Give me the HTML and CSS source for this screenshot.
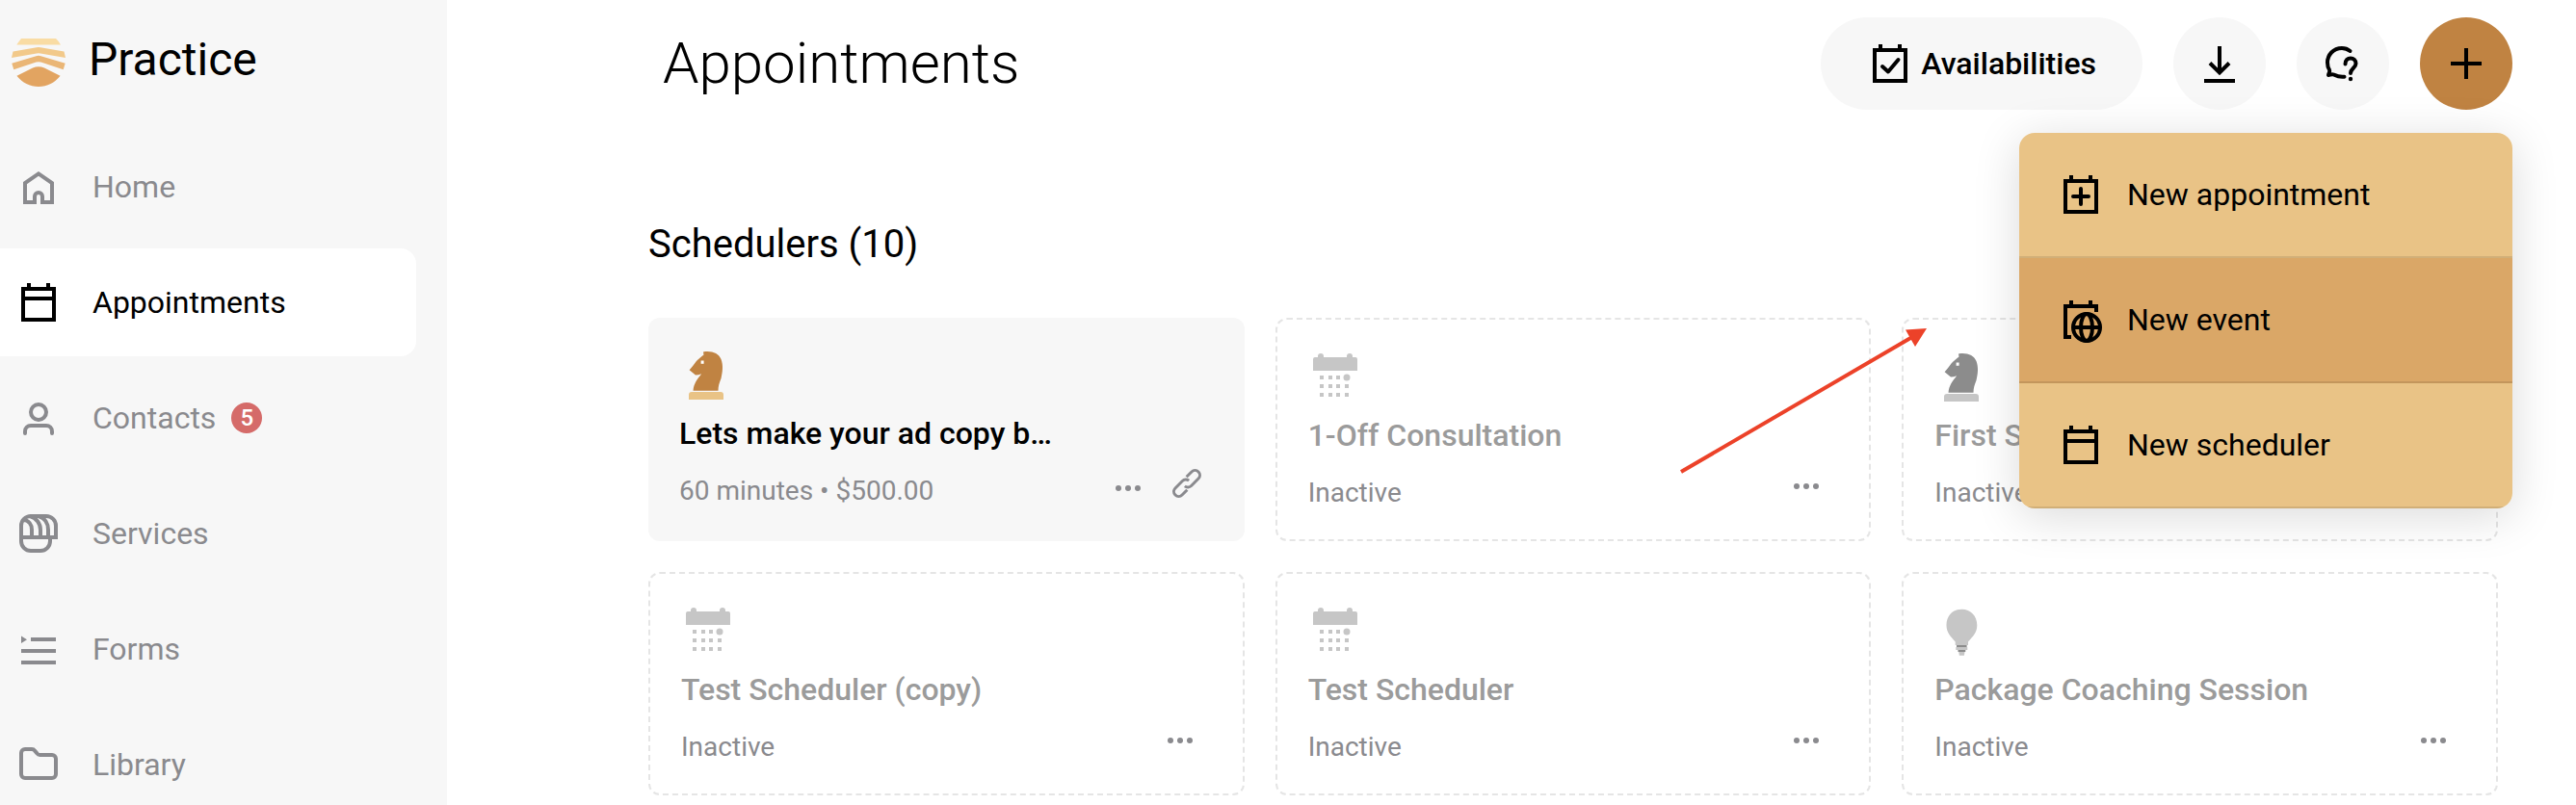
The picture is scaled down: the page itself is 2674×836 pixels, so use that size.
FILE: index.html
```html
<!DOCTYPE html>
<html lang="en">
<head>
  <meta charset="UTF-8">
  <meta name="viewport" content="width=device-width, initial-scale=1.0">
  <title>Practice - Appointments</title>
  <link rel="stylesheet" href="styles.css">
</head>
<body>
  <!-- shared icons -->
  <svg class="sprite" aria-hidden="true">
    <symbol id="calendar" viewBox="0 0 48 48">
      <path d="M8 10h32v32H8zM8 20h32M14 4v6M34 4v6"/>
    </symbol>
    <symbol id="dots" viewBox="0 0 32 32">
      <g fill="currentColor" stroke="none">
        <circle cx="5" cy="17" r="3"/>
        <circle cx="15" cy="17" r="3"/>
        <circle cx="25" cy="17" r="3"/>
      </g>
    </symbol>
    <symbol id="month" viewBox="0 0 56 56">
      <path fill="#c6c6c6" d="M5 9a2 2 0 0 1 2-2h3V6a3 3 0 0 1 6 0v1h24V6a3 3 0 0 1 6 0v1h3a2 2 0 0 1 2 2v12H5z"/>
      <path fill="#c6c6c6" d="M12 26h4v4h-4zM21 26h4v4h-4zM29 26h4v4h-4zM12 35h4v4h-4zM21 35h4v4h-4zM29 35h4v4h-4zM38 35h4v4h-4zM12 44h4v4h-4zM21 44h4v4h-4zM29 44h4v4h-4zM38 44h4v4h-4z"/>
      <circle fill="#c6c6c6" cx="40" cy="28" r="3.5"/>
    </symbol>
    <symbol id="knight" viewBox="0 0 56 56">
      <path fill="var(--piece)" d="M25 3.400C34 2 41 5 43.500 11c2.500 7 1.500 13 0 20-2 5-3 8-3 12.700h-26c.7-7 3.800-11.500 8.700-17.400-2 .8-4 1.200-6.200 1.200l-6.400-5.200C13 19.500 15 17 17.500 13.500 20 10.500 23 8.500 25.500 6.500z"/>
      <path fill="#fff" d="M22.600 12.500h3v3.300h-3z"/>
      <path fill="var(--base)" d="M10 53v-5a3 3 0 0 1 3-3h30a3 3 0 0 1 3 3v5z"/>
    </symbol>
    <symbol id="bulb" viewBox="0 0 56 56">
      <path fill="#c6c6c6" d="M28.300 4.700c9.500 0 16 7 16 16.500 0 8-4.500 11.500-9.300 17.300V42H21.700v-3.500c-4.700-5.800-9.200-9.300-9.200-17.300 0-9.500 6.500-16.500 15.800-16.500z"/>
      <path fill="#8c8c8c" d="M23 42h10.600v2H23zM24.500 47h7.800v2h-7.800z"/>
      <path fill="#c6c6c6" d="M22.300 44h12v3h-12zM25.300 49h6.200l-.6 3.700h-5z"/>
    </symbol>
  </svg>

  <div class="app">
    <aside class="sidebar">
      <div class="brand">
        <svg class="logo" viewBox="0 0 56 50">
          <path fill="#f9dca4" d="M5.300 6.500C7 4 8.500 2 10 0h36c2 2 3.500 4 5 6.500z"/>
          <path fill="#f2c98a" d="M1.500 13.500L26 9.300q2-.4 4 0l24.500 4.200L56 20l-26-4.500q-2-.4-4 0L0 20z"/>
          <path fill="#eab676" d="M.3 25.800L25.500 18.200q2.500-.7 5 0l25.200 7.600-2 6.400-23.200-7.600q-2.500-.8-5 0L2.300 32.200z"/>
          <path fill="#e2a461" d="M5.500 38.800L22 30.500q6-2.400 12 0l16.500 8.300C45 46 37 50 28 50S11 46 5.500 38.800z"/>
        </svg>
        <span class="brand-name">Practice</span>
      </div>
      <nav>
        <ul class="nav-list">
          <li>
            <a class="nav-link" href="#home">
              <svg class="icon" viewBox="0 0 48 48"><path d="M10 40h10v-6a4 4 0 0 1 8 0v6h10V20L24 10.400 10 20z"/></svg>
              Home
            </a>
          </li>
          <li>
            <a class="nav-link active" href="#appointments">
              <svg class="icon"><use href="#calendar"/></svg>
              Appointments
            </a>
          </li>
          <li>
            <a class="nav-link" href="#contacts">
              <svg class="icon" viewBox="0 0 48 48"><circle cx="24" cy="18" r="8"/><path stroke-linecap="round" d="M10 40v-2a6 6 0 0 1 6-6h16a6 6 0 0 1 6 6v2"/></svg>
              Contacts
              <span class="badge">5</span>
            </a>
          </li>
          <li>
            <a class="nav-link" href="#services">
              <svg class="icon" viewBox="0 0 48 48"><path d="M6 28V16A10 10 0 0 1 16 6h16a10 10 0 0 1 10 10v12zM6 28v4a10 10 0 0 0 10 10h10a10 10 0 0 0 10-10v-4M8 10c6 0 9 5 9 10v8M15 6c7 2 11 8 11 14v8M24 6c7 2 10 8 10 14v8"/></svg>
              Services
            </a>
          </li>
          <li>
            <a class="nav-link" href="#forms">
              <svg class="icon" viewBox="0 0 48 48"><path d="M16 14h26M6 26h36M6 38h36"/><path fill="currentColor" stroke="none" d="M6 10.500l6 3.700-6 3.800z"/></svg>
              Forms
            </a>
          </li>
          <li>
            <a class="nav-link" href="#library">
              <svg class="icon" viewBox="0 0 48 48"><path d="M10 8h7q2 0 3 1.500l2.500 3q1 1.500 3 1.500H38a4 4 0 0 1 4 4v16a4 4 0 0 1-4 4H10a4 4 0 0 1-4-4V12a4 4 0 0 1 4-4z"/></svg>
              Library
            </a>
          </li>
        </ul>
      </nav>
    </aside>

    <main class="main">
      <header class="page-header">
        <h1>Appointments</h1>
        <div class="header-actions">
          <button class="pill" type="button">
            <svg class="icon" viewBox="0 0 48 48"><path d="M8 10h32v32H8zM14 4v6M34 4v6"/><path stroke-linecap="round" stroke-linejoin="round" d="M16 27l6 5.500L32.500 20"/></svg>
            Availabilities
          </button>
          <button class="round" type="button" aria-label="Download">
            <svg class="icon" viewBox="0 0 48 48"><path d="M24 6v28M14 23.500l10 10 10-10M8 42h32"/></svg>
          </button>
          <button class="round" type="button" aria-label="Help">
            <svg class="icon" viewBox="0 0 48 48"><path stroke-linecap="round" stroke-linejoin="round" d="M31.500 11C29 9 26 8 23 8 14 8 8 15 8 23c0 3 .7 5.500 2 7.500.8 1.500-.5 3.500-1 5.500 2-.3 3.500-1.300 5.500-.5 3.500 1.700 7 2.700 11 2.200M26.500 24.500c0-4 2.500-6 5.500-6s5.500 2.300 5.500 5.500c0 4.500-5.500 5-5.500 10"/><circle cx="32" cy="40" r="2.200" fill="currentColor" stroke="none"/></svg>
          </button>
          <div class="create">
            <button class="round fab" type="button" aria-label="Create" aria-expanded="true">
              <svg class="icon" viewBox="0 0 48 48"><path d="M24 8v32M8 24h32"/></svg>
            </button>
            <div class="create-menu">
              <button class="menu-item" type="button">
                <svg class="icon" viewBox="0 0 48 48"><path d="M8 10h32v32H8zM14 4v6M34 4v6"/><path stroke-linecap="round" d="M24 18v16M16 26h16"/></svg>
                New appointment
              </button>
              <button class="menu-item selected" type="button">
                <svg class="icon" viewBox="0 0 48 48"><path d="M14 42H8V10h32v6M14 4v6M34 4v6"/><circle cx="30" cy="32" r="14"/><ellipse cx="30" cy="32" rx="6" ry="14"/><path d="M16 32h28"/></svg>
                New event
              </button>
              <button class="menu-item" type="button">
                <svg class="icon"><use href="#calendar"/></svg>
                New scheduler
              </button>
            </div>
          </div>
        </div>
      </header>

      <section class="schedulers">
        <h2>Schedulers (10)</h2>
        <div class="cards">
          <article class="card">
            <svg class="card-icon knight"><use href="#knight"/></svg>
            <h3>Lets make your ad copy b…</h3>
            <div class="card-foot">
              <p>60 minutes • $500.00</p>
              <div class="card-actions">
                <button type="button" aria-label="More"><svg><use href="#dots"/></svg></button>
                <button class="link-btn" type="button" aria-label="Copy link">
                  <svg viewBox="-16 -16 32 32"><g transform="rotate(-45)"><path d="M-4.500 5H-12a5 5 0 0 1 0-10H-1.500a5 5 0 0 1 5 4.500M4.500-5H12a5 5 0 0 1 0 10H1.500a5 5 0 0 1-5-4.500"/></g></svg>
                </button>
              </div>
            </div>
          </article>

          <article class="card inactive">
            <svg class="card-icon"><use href="#month"/></svg>
            <h3>1-Off Consultation</h3>
            <div class="card-foot">
              <p>Inactive</p>
              <div class="card-actions">
                <button type="button" aria-label="More"><svg><use href="#dots"/></svg></button>
              </div>
            </div>
          </article>

          <article class="card inactive">
            <svg class="card-icon knight"><use href="#knight"/></svg>
            <h3>First Session</h3>
            <div class="card-foot">
              <p>Inactive</p>
              <div class="card-actions">
                <button type="button" aria-label="More"><svg><use href="#dots"/></svg></button>
              </div>
            </div>
            <svg class="pointer" viewBox="0 0 264 160">
              <path stroke="#ec4229" stroke-width="4" d="M5 154L245 14"/>
              <path fill="#ec4229" d="M260 5l-22 1.500L248 24z"/>
            </svg>
          </article>

          <article class="card inactive">
            <svg class="card-icon"><use href="#month"/></svg>
            <h3>Test Scheduler (copy)</h3>
            <div class="card-foot">
              <p>Inactive</p>
              <div class="card-actions">
                <button type="button" aria-label="More"><svg><use href="#dots"/></svg></button>
              </div>
            </div>
          </article>

          <article class="card inactive">
            <svg class="card-icon"><use href="#month"/></svg>
            <h3>Test Scheduler</h3>
            <div class="card-foot">
              <p>Inactive</p>
              <div class="card-actions">
                <button type="button" aria-label="More"><svg><use href="#dots"/></svg></button>
              </div>
            </div>
          </article>

          <article class="card inactive">
            <svg class="card-icon"><use href="#bulb"/></svg>
            <h3>Package Coaching Session</h3>
            <div class="card-foot">
              <p>Inactive</p>
              <div class="card-actions">
                <button type="button" aria-label="More"><svg><use href="#dots"/></svg></button>
              </div>
            </div>
          </article>
        </div>
      </section>
    </main>
  </div>
</body>
</html>
```
FILE: styles.css
```css
* {
  box-sizing: border-box;
  margin: 0;
  padding: 0;
}

body {
  font-family: Roboto, sans-serif;
  font-size: 32px;
  line-height: 40px;
  color: #000;
  background: #fff;
}

button {
  font: inherit;
  color: inherit;
  background: none;
  border: none;
  cursor: pointer;
}

.sprite {
  display: none;
}

.icon {
  width: 48px;
  height: 48px;
  flex: none;
  fill: none;
  stroke: currentColor;
  stroke-width: 4px;
}

.app {
  display: flex;
  height: 100vh;
  overflow: hidden;
}

/* sidebar */
.sidebar {
  width: 464px;
  flex: none;
  padding-right: 32px;
  background: #f7f7f7;
}

.brand {
  display: flex;
  align-items: flex-start;
  gap: 24px;
  height: 138px;
  padding: 34px 0 0 12px;
}

.logo {
  width: 56px;
  height: 50px;
  margin-top: 6px;
}

.brand-name {
  font-size: 48px;
  line-height: 56px;
}

.nav-list {
  display: flex;
  flex-direction: column;
  gap: 8px;
  list-style: none;
}

.nav-link {
  display: flex;
  align-items: center;
  height: 112px;
  padding-left: 16px;
  border-radius: 0 16px 16px 0;
  color: #8a8a8e;
  text-decoration: none;
}

.nav-link .icon {
  margin-right: 32px;
}

.nav-link.active {
  background: #fff;
  color: #000;
}

.badge {
  width: 32px;
  height: 32px;
  margin-left: 16px;
  border-radius: 50%;
  background: #d56b69;
  color: #fff;
  font-size: 24px;
  font-weight: 500;
  line-height: 32px;
  text-align: center;
}

/* header */
.main {
  flex: 1;
  min-width: 0;
}

.page-header {
  display: flex;
  align-items: center;
  justify-content: space-between;
  padding: 18px 66px 0 224px;
}

h1 {
  font-size: 60px;
  font-weight: 300;
  line-height: 72px;
}

.header-actions {
  display: flex;
  gap: 32px;
}

.pill {
  display: flex;
  align-items: center;
  gap: 8px;
  height: 96px;
  padding: 0 48px;
  border-radius: 48px;
  background: #f7f7f7;
  font-weight: 500;
}

.round {
  display: flex;
  align-items: center;
  justify-content: center;
  width: 96px;
  height: 96px;
  border-radius: 50%;
  background: #f7f7f7;
}

.fab {
  background: #c08342;
}

.create {
  position: relative;
}

.create-menu {
  position: absolute;
  top: 120px;
  right: 0;
  z-index: 10;
  width: 512px;
  border-radius: 16px;
  overflow: hidden;
  box-shadow: 0 8px 48px rgba(0, 0, 0, 0.15);
}

.menu-item {
  display: flex;
  align-items: center;
  gap: 24px;
  width: 100%;
  height: 130px;
  padding: 0 40px;
  border-bottom: 2px solid rgba(0, 0, 0, 0.1);
  background: #e9c386;
}

.menu-item.selected {
  background: #daa767;
}

/* schedulers */
.schedulers {
  padding: 116px 81px 0 209px;
}

h2 {
  margin-bottom: 52px;
  font-size: 40px;
  font-weight: 400;
  line-height: 48px;
}

.cards {
  display: grid;
  grid-template-columns: repeat(3, 1fr);
  gap: 32px;
}

.card {
  position: relative;
  height: 232px;
  padding: 32px;
  border-radius: 12px;
  background: #f7f7f7;
}

.card.inactive {
  border: 2px dashed #e5e5e5;
  background: #fff;
}

.card-icon {
  display: block;
  width: 56px;
  height: 56px;
  margin-bottom: 12px;
}

.knight {
  --piece: #c08342;
  --base: #e9c386;
}

.inactive .knight {
  --piece: #8c8c8c;
  --base: #c6c6c6;
}

h3 {
  margin-bottom: 20px;
  font-size: 32px;
  font-weight: 500;
  line-height: 40px;
  white-space: nowrap;
}

.inactive h3 {
  color: #9b9b9b;
}

.card-foot {
  display: flex;
  align-items: flex-start;
  justify-content: space-between;
  color: #8a8a8e;
  font-size: 28px;
}

.card-actions {
  display: flex;
  gap: 8px;
}

.inactive .card-actions {
  margin: -4px 8px 0 0;
}

.card-actions button {
  width: 48px;
  height: 32px;
}

.card-actions svg {
  display: block;
  width: 32px;
  height: 32px;
  margin: 0 auto;
  fill: none;
  stroke: currentColor;
  stroke-width: 3px;
}

.card-actions .link-btn {
  width: 56px;
  margin-top: -4px;
}

.pointer {
  position: absolute;
  top: 4px;
  left: -236px;
  width: 264px;
  height: 160px;
}
```
